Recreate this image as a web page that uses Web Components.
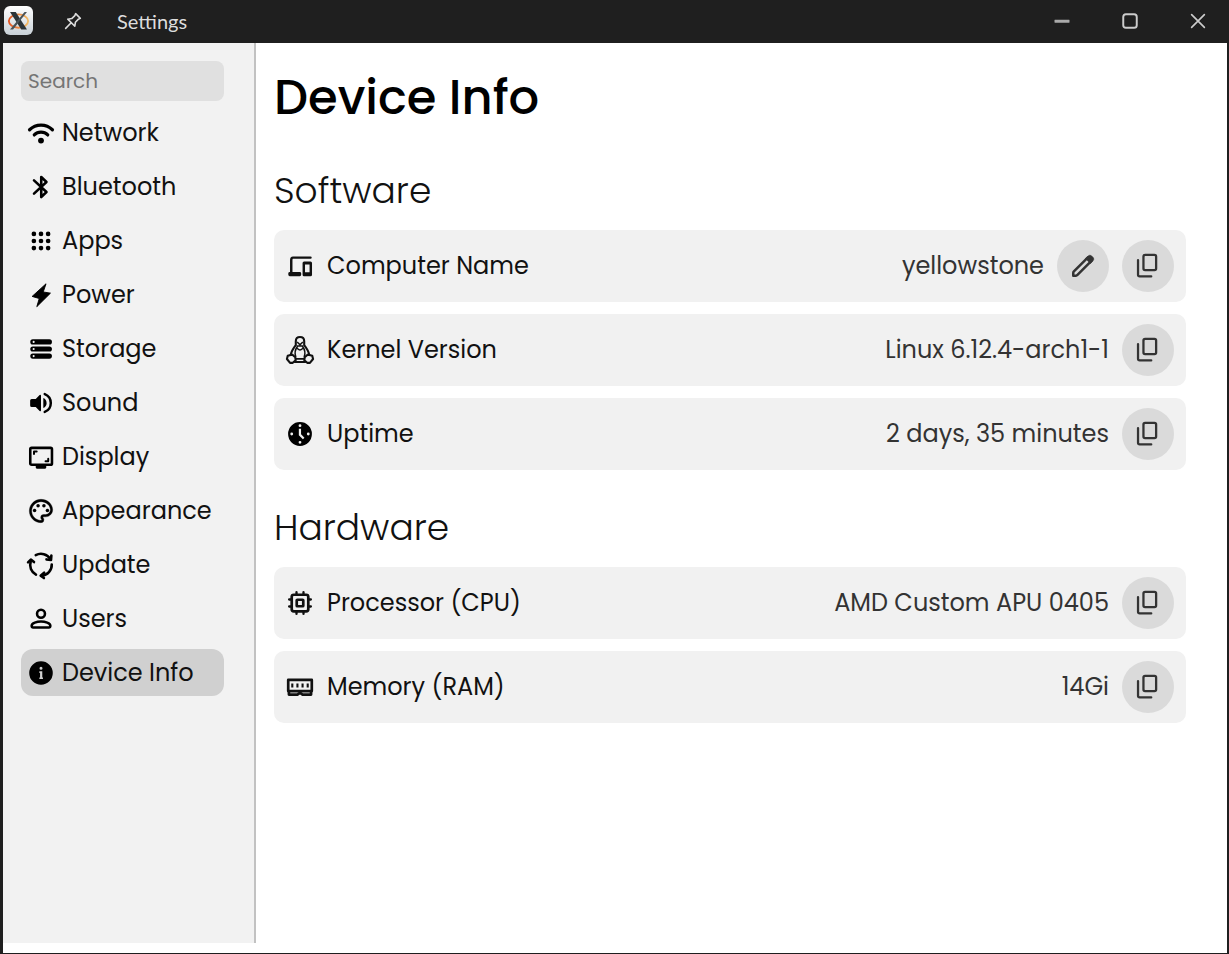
<!DOCTYPE html>
<html lang="en">
<head>
<meta charset="utf-8">
<meta name="viewport" content="width=device-width, initial-scale=1">
<title>Settings</title>
<style>
  body { margin: 0; background: #fff; color: #111; font-family: Poppins, Inter, sans-serif; font-size: 24px; }
</style>
</head>
<body>
<app-window>
  <title-bar slot="title">Settings</title-bar>
  <side-nav slot="nav">
    <nav-item icon="wifi" href="#network">Network</nav-item>
    <nav-item icon="bluetooth" href="#bluetooth">Bluetooth</nav-item>
    <nav-item icon="apps" href="#apps">Apps</nav-item>
    <nav-item icon="bolt" href="#power">Power</nav-item>
    <nav-item icon="storage" href="#storage">Storage</nav-item>
    <nav-item icon="sound" href="#sound">Sound</nav-item>
    <nav-item icon="display" href="#display">Display</nav-item>
    <nav-item icon="palette" href="#appearance">Appearance</nav-item>
    <nav-item icon="update" href="#update">Update</nav-item>
    <nav-item icon="user" href="#users">Users</nav-item>
    <nav-item icon="info" href="#device-info" active>Device Info</nav-item>
  </side-nav>
  <settings-page heading="Device Info">
    <info-section heading="Software">
      <info-row icon="devices" label="Computer Name">yellowstone
        <round-button slot="actions" icon="edit" label="Edit computer name"></round-button>
        <round-button slot="actions" icon="copy" label="Copy computer name"></round-button>
      </info-row>
      <info-row icon="linux" label="Kernel Version">Linux 6.12.4-arch1-1
        <round-button slot="actions" icon="copy" label="Copy kernel version"></round-button>
      </info-row>
      <info-row icon="clock" label="Uptime">2 days, 35 minutes
        <round-button slot="actions" icon="copy" label="Copy uptime"></round-button>
      </info-row>
    </info-section>
    <info-section heading="Hardware">
      <info-row icon="cpu" label="Processor (CPU)">AMD Custom APU 0405
        <round-button slot="actions" icon="copy" label="Copy processor"></round-button>
      </info-row>
      <info-row icon="ram" label="Memory (RAM)">14Gi
        <round-button slot="actions" icon="copy" label="Copy memory"></round-button>
      </info-row>
    </info-section>
  </settings-page>
</app-window>

<script>
const line = (d, w = 2) => `<path d="${d}" fill="none" stroke="currentColor" stroke-width="${w}" stroke-linecap="round" stroke-linejoin="round"/>`;
const dot = (x, y, r) => `<circle cx="${x}" cy="${y}" r="${r}"/>`;

const ICONS = {
  wifi: line('M2.2 9.2a14 14 0 0 1 19.6 0', 2.8) + line('M6.2 13.7a8.2 8.2 0 0 1 11.6 0', 2.7) + dot(12, 18.5, 2.5),
  bluetooth: line('M6 6.3 16.7 16.3 12.2 20.6V3.4L16.7 7.7 6 17.7', 2.2),
  apps: [5.9, 12, 18.1].map(y => [5.9, 12, 18.1].map(x => dot(x, y, 2)).join('')).join(''),
  bolt: `<path d="M16.3 2.4 13.9 9.4 20.1 10.4 8.4 22 10.5 15 4.4 13.2Z" stroke="currentColor" stroke-width=".8" stroke-linejoin="round"/>`,
  storage: [5.9, 12, 18.1].map(y => `<path fill-rule="evenodd" d="M5 ${y - 2.2}H19.2a2.2 2.2 0 0 1 0 4.4H5a2.2 2.2 0 0 1 0-4.4zM5.7 ${y - .9}a.9.9 0 1 0 0 1.8.9.9 0 0 0 0-1.8z"/>`).join(''),
  sound: `<path d="M4 8.5H7.5L10.8 5.2Q12 4.4 12 6V18Q12 19.6 10.8 18.8L7.5 15.5H4Q2.7 15.5 2.7 14.2V9.8Q2.7 8.5 4 8.5z"/><path d="M14 7.7c1.8.8 2.8 2.3 2.8 4.3s-1 3.500-2.8 4.300z"/>` + line('M15.2 4.3a8.3 8.3 0 0 1 0 15.4', 2.1),
  display: line('M4 4.2H20.2Q21.4 4.2 21.4 5.4V17.5Q21.4 18.7 20.2 18.7H4Q2.8 18.7 2.8 17.5V5.4Q2.8 4.2 4 4.2z', 2.2) + line('M6 9.4V7.3H8.3M18.200 13.500V15.700H15.900', 1.700) + '<path d="M7.500 19H16.500V21Q16.500 22 15.500 22H8.500Q7.500 22 7.500 21z"/>',
  palette: '<path d="M12 22C6.49 22 2 17.51 2 12S6.49 2 12 2s10 4.04 10 9c0 3.31-2.69 6-6 6h-1.77c-.28 0-.5.22-.5.5 0 .12.05.23.13.33.41.47.64 1.06.64 1.67A2.5 2.5 0 0 1 12 22zm0-18c-4.41 0-8 3.59-8 8s3.59 8 8 8c.28 0 .5-.22.5-.5a.54.54 0 0 0-.14-.35c-.41-.46-.63-1.05-.63-1.65a2.5 2.5 0 0 1 2.5-2.5H16c2.21 0 4-1.79 4-4 0-3.86-3.59-7-8-7z" stroke="currentColor" stroke-width=".3"/>' + dot(6.5, 11.5, 1.5) + dot(9.5, 7.5, 1.5) + dot(14.5, 7.5, 1.5) + dot(17.5, 11.5, 1.5),
  update: line('M7.500 3.600A9.300 9.300 0 0 1 20 7', 2.200) + line('M21.200 11.500A9.300 9.300 0 0 1 12.500 21.200', 2.200) + line('M7.700 20.300A9.300 9.300 0 0 1 3.200 9', 2.200) + line('M20.900 3.800 20.600 7.700 16.700 7.200', 2.200) + line('M14.700 18.500 11.700 21.200 14.500 23.200', 2.200) + line('M.9 9.800 3.300 7.300 6 9.500', 2.200),
  user: `<circle cx="12" cy="7.500" r="3.400" fill="none" stroke="currentColor" stroke-width="2.200"/>` + line('M5 19.300H19Q20 19.300 20 18.300V17.700C20 15.400 15.500 14.200 12 14.200S4 15.400 4 17.700V18.300Q4 19.300 5 19.300z', 2.200),
  info: '<path fill-rule="evenodd" d="M12 1.900a10.100 10.100 0 1 0 0 20.200 10.100 10.100 0 0 0 0-20.200zM12 6.700a1.300 1.300 0 1 1 0 2.600A1.300 1.300 0 0 1 12 6.700zM10.600 10.600H13.100V15.900H13.700V17.200H10.600V15.900H11.200V11.900H10.600z"/>',
  devices: line('M4.500 18V7Q4.500 4.800 6 4.800H21', 2.100) + '<rect x="2" y="17.200" width="11" height="3.500" rx="1.200"/>' + '<path fill-rule="evenodd" d="M15.500 8.200H21Q22.300 8.200 22.300 9.500V19.400Q22.300 20.700 21 20.700H15.500Q14.200 20.700 14.200 19.400V9.500Q14.200 8.200 15.500 8.200zM16.300 10.800V17.400H20.200V10.800z"/>',
  linux: line('M8.400 7.800V4.500Q8.400.9 12 .9T15.600 4.500V7.800Q19.300 12.500 20 16.300M8.400 7.800Q4.700 12.500 4 16.300', 1.800) + line('M10 5.500 12 7.500 14 5.500M9.500 8.500H14.500M9.800 9Q6.800 13 8.300 17.600M14.200 9Q17.200 13 15.700 17.600M10 11Q12 13 14 11', 1.300) + line('M4 16.300 1.500 17 .8 19.700 3.500 23 5.800 23 8.300 20.800 8 18.300 5.500 16Z', 1.800) + line('M20 16.300 22.500 17 23.200 19.700 20.500 23 18.200 23 15.700 20.800 16 18.300 18.500 16Z', 1.800) + line('M8.300 19.600H15.700M7.500 22.300H16.500', 1.600),
  clock: '<path fill-rule="evenodd" fill="#000" d="M12 1.800a10.200 10.200 0 1 0 0 20.400 10.200 10.200 0 0 0 0-20.400zM12 3.700a1.200 1.200 0 1 1 0 2.400 1.200 1.200 0 0 1 0-2.400zM12 17.900a1.200 1.200 0 1 1 0 2.400 1.200 1.200 0 0 1 0-2.400zM4.900 10.800a1.200 1.200 0 1 1 0 2.400 1.200 1.200 0 0 1 0-2.400zM19.100 10.800a1.200 1.200 0 1 1 0 2.400 1.200 1.200 0 0 1 0-2.400zM11 7.500h1.900v4.800l2.900 2.900-1.300 1.300L11 13z"/>',
  cpu: '<g fill="none" stroke="currentColor" stroke-width="2.300"><rect x="4.900" y="4.900" width="14.200" height="14.200" rx="1.800"/><rect x="9.200" y="9.200" width="5.600" height="5.600" rx=".5"/></g>' + line('M9 2.700V4.500M15 2.700V4.500M9 19.500V21.300M15 19.500V21.300M2.700 9H4.500M2.700 15H4.500M19.500 9H21.300M19.500 15H21.300', 2),
  ram: line('M1.900 5.900H22.100V15.500H1.900z', 2.300) + line('M2.500 16V18.500H10L11.200 17.400H12.800L14 18.500H21.500V16', 2.300) + '<path d="M4.500 9H6.300V12.500H4.500zM8.900 9H10.700V12.500H8.900zM13.300 9H15.100V12.500H13.300zM17.700 9H19.500V12.500H17.700z"/>',
  edit: line('M3 20.900V18.400Q3 17.600 3.600 17L16.800 3.900 20 7.100 6.900 20.300Q6.300 20.900 5.500 20.900Z', 2.300) + '<path d="M14.200 5 17 2.600Q18.400 1.400 19.800 2.600L21.400 4.200Q22.600 5.600 21.400 7L18.900 9.800z" stroke="currentColor" stroke-width=".6"/>',
  copy: line('M9.300 1.700H18Q19.500 1.700 19.500 3.200V14.400Q19.500 15.900 18 15.900H9.300Q7.800 15.900 7.800 14.400V3.200Q7.800 1.700 9.300 1.700z', 2.100) + line('M2.800 6.500V20.100Q2.800 21.600 4.300 21.600H15', 2.100),
  pin: line('M15.200 3.200 20.800 8.800 18.500 9.800 14.900 13.500 14.200 18.300 5.700 9.800 10.500 9.100 14.200 5.500ZM9.800 14.100 3.200 20.800', 1.900),
  minimize: '<rect x="2" y="10.200" width="20" height="4" rx=".5" fill="#aaa"/>',
  maximize: line('M6.500 3H17.500Q21 3 21 6.500V17.500Q21 21 17.500 21H6.500Q3 21 3 17.500V6.500Q3 3 6.500 3z', 2.600),
  close: line('M3.500 3.500 20.500 20.500M20.500 3.500 3.500 20.500', 2.200),
  xorg: `<defs><linearGradient id="plate" x2="0" y2="1"><stop stop-color="#fff"/><stop offset="1" stop-color="#c9d1d7"/></linearGradient><linearGradient id="ring"><stop stop-color="#e2531f"/><stop offset="1" stop-color="#f4bd67"/></linearGradient></defs><rect width="24" height="24" rx="5" fill="url(#plate)"/><ellipse cx="12" cy="12.500" rx="8" ry="5.500" fill="none" stroke="url(#ring)" stroke-width="1.500"/><path d="M5 5H9.700L19 19.500H14.300z" fill="#2c3438"/><path d="M17 5H19L7.500 19.500H5z" fill="#4a5256"/>`
};

class Base extends HTMLElement {
  connectedCallback() {
    if (this.shadowRoot) return;
    this.attachShadow({ mode: 'open' }).innerHTML = this.render();
  }
}

customElements.define('ui-icon', class extends Base {
  render() {
    return `<style>
      :host { display: block; flex: none; width: var(--icon-size, 28px); height: var(--icon-size, 28px); }
      svg { display: block; width: 100%; height: 100%; overflow: visible; }
    </style><svg viewBox="0 0 24 24" fill="currentColor" aria-hidden="true">${ICONS[this.getAttribute('name')]}</svg>`;
  }
});

customElements.define('app-window', class extends Base {
  render() {
    return `<style>
      :host { display: flex; flex-direction: column; box-sizing: border-box; min-height: 100vh; background: #fff;
        border: solid #1f1f1f; border-width: 0 2px 1px 3px; }
      .body { flex: 1; display: flex; }
      slot[name=nav]::slotted(*) { flex: none; }
      main { flex: 1; min-width: 0; }
    </style>
    <slot name="title"></slot>
    <div class="body"><slot name="nav"></slot><main><slot></slot></main></div>`;
  }
});

customElements.define('title-bar', class extends Base {
  render() {
    return `<style>
      :host { display: block; background: #1f1f1f; color: #ddd; font: 20px/28px Lato, sans-serif; }
      header { display: flex; align-items: center; height: 43px; box-sizing: border-box; padding: 0 0 2px 1px; }
      button { display: grid; place-items: center; padding: 0; border: 0; background: none; color: inherit; }
      .logo { --icon-size: 29px; }
      .pin { --icon-size: 20px; width: 80px; height: 40px; margin-right: 4px; }
      .title { flex: 1; }
      .controls { display: flex; --icon-size: 18px; color: #ccc; }
      .controls button { width: 68px; height: 40px; }
      .controls button:last-child { margin-right: -5px; }
    </style>
    <header>
      <ui-icon class="logo" name="xorg"></ui-icon>
      <button class="pin" type="button" aria-label="Keep above"><ui-icon name="pin"></ui-icon></button>
      <span class="title"><slot></slot></span>
      <div class="controls">
        <button type="button" aria-label="Minimize"><ui-icon name="minimize"></ui-icon></button>
        <button type="button" aria-label="Maximize"><ui-icon name="maximize"></ui-icon></button>
        <button type="button" aria-label="Close"><ui-icon name="close"></ui-icon></button>
      </div>
    </header>`;
  }
});

customElements.define('side-nav', class extends Base {
  render() {
    return `<style>
      :host { display: block; box-sizing: border-box; width: 253px; margin-bottom: 10px; padding: 18px 30px 18px 18px;
        background: #f2f2f2; border-right: 2px solid #c2c2c2; }
      input { display: block; box-sizing: border-box; width: 100%; height: 40px; margin: 0 0 8px; padding: 0 7px;
        border: 0; border-radius: 8px; background: #e0e0e0; color: #111; font: inherit; font-size: 20px; }
      input::placeholder { color: #757575; opacity: 1; }
      nav { display: grid; gap: 7px; }
    </style>
    <input type="search" placeholder="Search" aria-label="Search">
    <nav aria-label="Settings"><slot></slot></nav>`;
  }
});

customElements.define('nav-item', class extends Base {
  render() {
    return `<style>
      :host { display: block; }
      a { display: flex; align-items: center; gap: 7px; height: 47px; padding: 0 6px; border-radius: 12px;
        color: #111; text-decoration: none; white-space: nowrap; line-height: 36px; }
      :host([active]) a { background: #d0d0d0; }
      ui-icon { color: #000; }
    </style>
    <a href="${this.getAttribute('href')}"${this.hasAttribute('active') ? ' aria-current="page"' : ''}><ui-icon name="${this.getAttribute('icon')}"></ui-icon><span><slot></slot></span></a>`;
  }
});

customElements.define('settings-page', class extends Base {
  render() {
    return `<style>
      :host { display: block; padding: 20px 41px 20px 18px; }
      h1 { margin: 0; font-size: 48px; font-weight: 500; line-height: 70px; color: #000; }
    </style>
    <h1>${this.getAttribute('heading')}</h1><slot></slot>`;
  }
});

customElements.define('info-section', class extends Base {
  render() {
    return `<style>
      :host { display: block; margin-top: 31px; }
      h2 { margin: 0 0 12px; font-size: 36px; font-weight: 300; line-height: 54px; }
      .rows { display: grid; gap: 12px; }
    </style>
    <section><h2>${this.getAttribute('heading')}</h2><div class="rows"><slot></slot></div></section>`;
  }
});

customElements.define('info-row', class extends Base {
  render() {
    return `<style>
      :host { display: flex; align-items: center; gap: 13px; min-height: 72px; box-sizing: border-box; padding: 10px 12px;
        border-radius: 10px; background: #f1f1f1; line-height: 36px; }
      .label { flex: 1; }
      .value { color: #333; }
    </style>
    <ui-icon name="${this.getAttribute('icon')}"></ui-icon>
    <span class="label">${this.getAttribute('label')}</span>
    <span class="value"><slot></slot></span>
    <slot name="actions"></slot>`;
  }
});

customElements.define('round-button', class extends Base {
  render() {
    return `<style>
      :host { display: block; flex: none; }
      button { display: grid; place-items: center; width: 52px; height: 52px; padding: 0; border: 0; border-radius: 50%;
        background: #dadada; color: #333; --icon-size: 26px; }
    </style>
    <button type="button" aria-label="${this.getAttribute('label')}"><ui-icon name="${this.getAttribute('icon')}"></ui-icon></button>`;
  }
});
</script>
</body>
</html>
